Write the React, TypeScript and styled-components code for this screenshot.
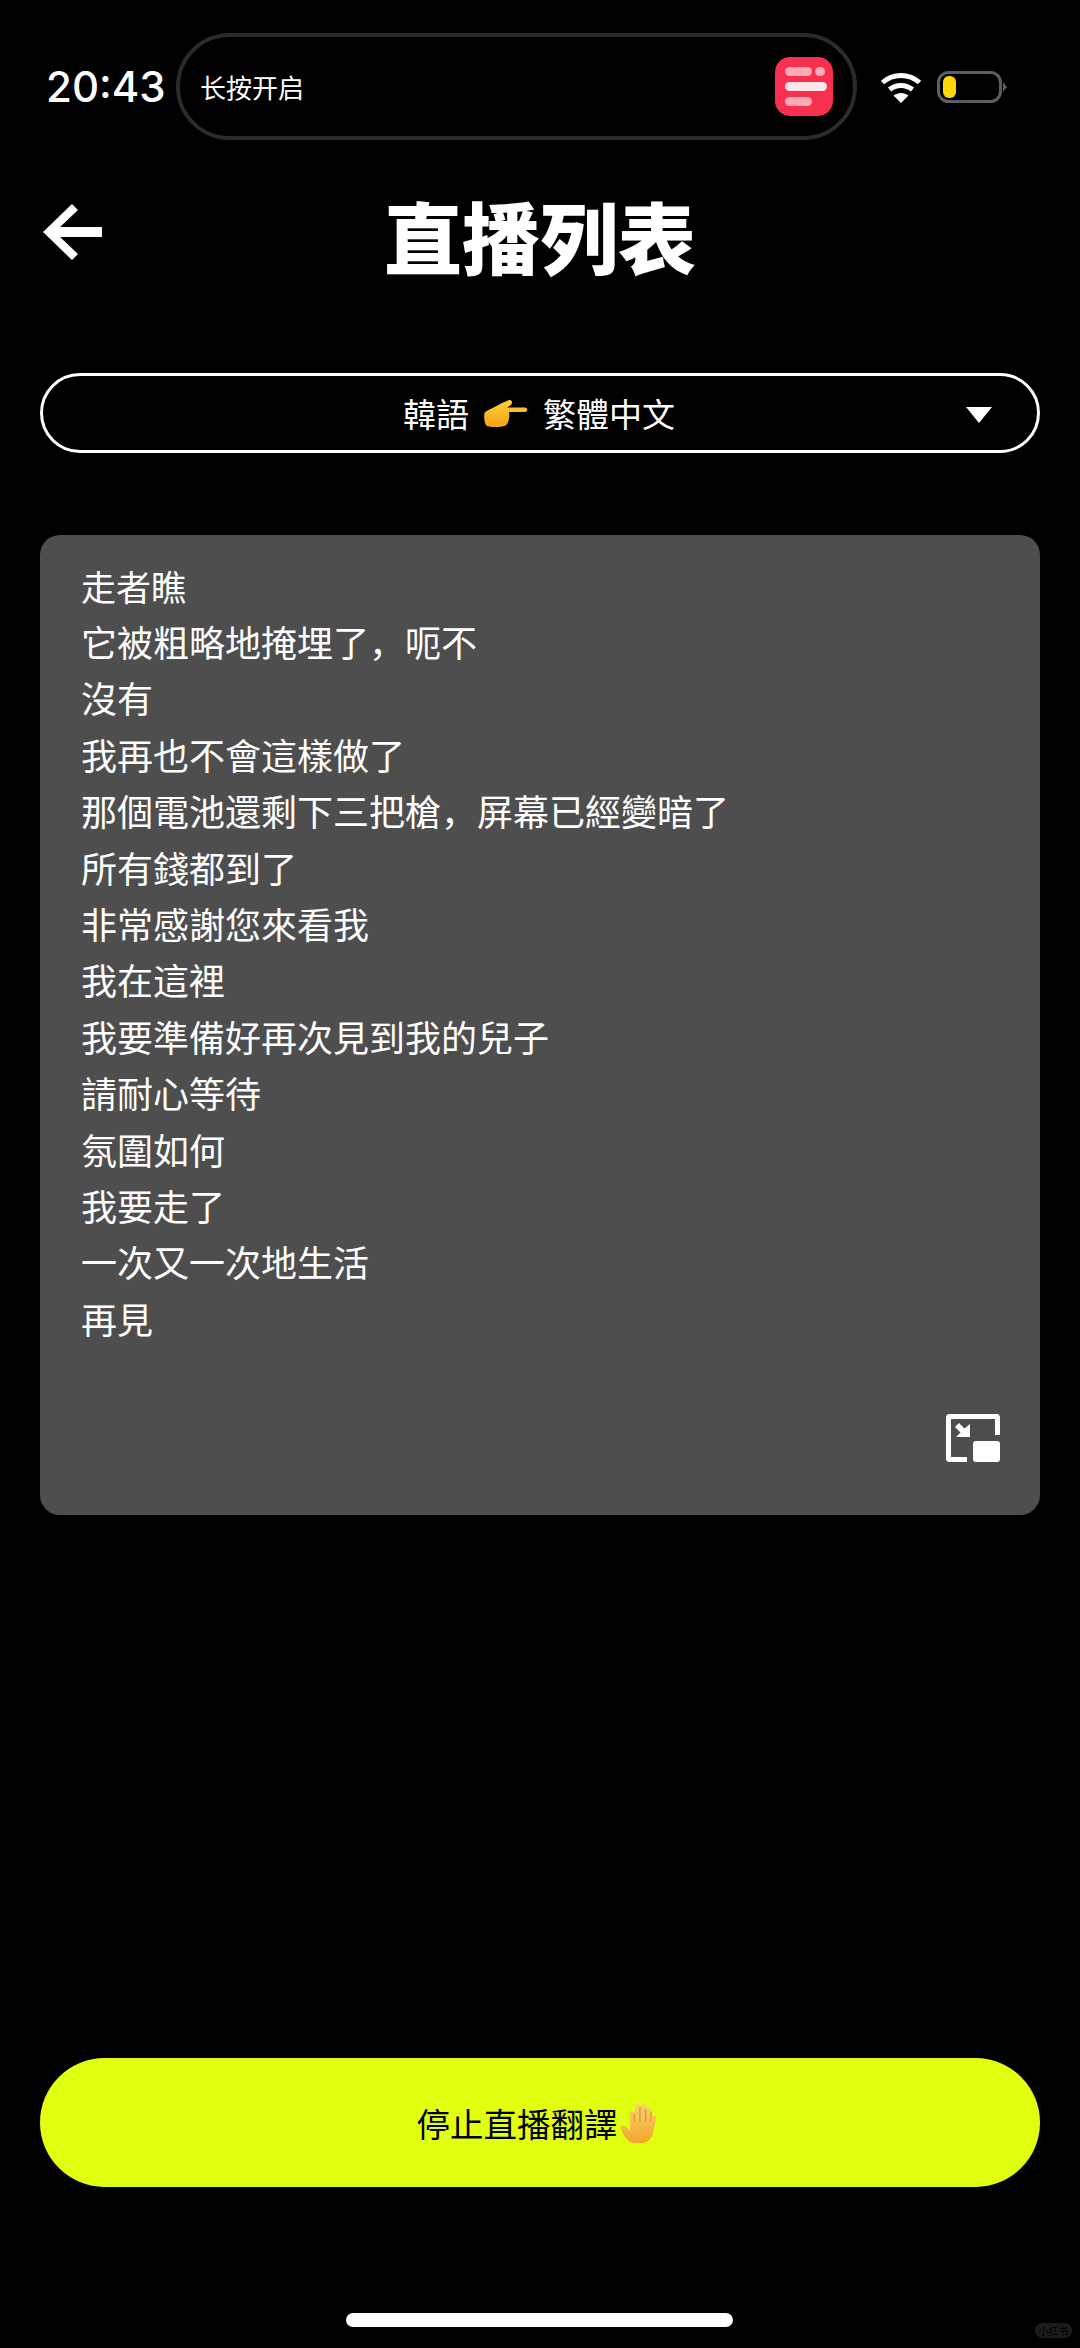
import React from 'react'
import styled, { createGlobalStyle } from 'styled-components'

const CJK = `"Noto Sans CJK SC", "Noto Sans CJK TC", "Liberation Sans", sans-serif`

const GlobalStyle = createGlobalStyle`
  html, body {
    margin: 0;
    padding: 0;
    background: #000;
  }
`

const Screen = styled.div`
  position: relative;
  width: 1080px;
  height: 2348px;
  box-sizing: border-box;
  padding: 33px 40px 0;
  display: flex;
  flex-direction: column;
  overflow: hidden;
  background: #000;
  color: #fff;
  font-family: ${CJK};
`

const StatusBar = styled.div`
  display: flex;
  align-items: center;
  height: 107px;
  margin: 0 31px 0 6px;
`
const Clock = styled.div`
  width: 130px;
  font-family: "Inter", "Liberation Sans", sans-serif;
  font-size: 42px;
  font-weight: 500;
`
const Island = styled.div`
  flex: none;
  width: 681px;
  height: 107px;
  box-sizing: border-box;
  padding: 0 20px 0 20px;
  display: flex;
  align-items: center;
  justify-content: space-between;
  border: 4px solid #2b2b2b;
  border-radius: 54px;
  font-size: 26px;
`
const StatusIcons = styled.div`
  display: flex;
  align-items: center;
  gap: 15px;
  margin-left: 23px;
`

const Header = styled.div`
  position: relative;
  display: flex;
  justify-content: center;
  margin-top: 49px;
`
const BackButton = styled.div`
  position: absolute;
  left: 3px;
  top: 15px;
  line-height: 0;
`
const Title = styled.h1`
  margin: 0;
  font-size: 78px;
  line-height: 92px;
  font-weight: 900;
`

const Selector = styled.div`
  position: relative;
  margin-top: 92px;
  height: 80px;
  box-sizing: border-box;
  display: flex;
  align-items: center;
  justify-content: center;
  gap: 15px;
  padding-right: 2px;
  border: 3px solid #fff;
  border-radius: 40px;
  font-size: 33px;
`
const Caret = styled.div`
  position: absolute;
  right: 45px;
  top: 31px;
  width: 0;
  height: 0;
  border-left: 13px solid transparent;
  border-right: 13px solid transparent;
  border-top: 16px solid #fff;
`

const Panel = styled.div`
  position: relative;
  margin-top: 82px;
  height: 980px;
  box-sizing: border-box;
  padding: 24px 41px 0;
  background: #4e4e4e;
  border-radius: 20px;
`
const Line = styled.div<{ $small?: boolean }>`
  font-size: ${(p) => (p.$small ? 35 : 36)}px;
  line-height: ${(p) => (p.$small ? 54 : 56.4)}px;
  white-space: nowrap;
`
const ShrinkIcon = styled.div`
  position: absolute;
  right: 40px;
  bottom: 53px;
  line-height: 0;
`

const StopButton = styled.div`
  position: absolute;
  left: 40px;
  right: 40px;
  top: 2058px;
  height: 129px;
  box-sizing: border-box;
  padding-right: 6px;
  display: flex;
  align-items: center;
  justify-content: center;
  gap: 2px;
  background: #e1ff10;
  border-radius: 65px;
  color: #000;
  font-size: 33.5px;
`
const HomeBar = styled.div`
  position: absolute;
  left: 346px;
  top: 2313px;
  width: 387px;
  height: 14px;
  border-radius: 7px;
  background: #fff;
`
const Watermark = styled.div`
  position: absolute;
  left: 1035px;
  top: 2323px;
  width: 37px;
  height: 15px;
  border-radius: 8px;
  background: #1c1c1c;
  color: #000;
  font-size: 10px;
  line-height: 15px;
  text-align: center;
`

const lines = [
  '它被粗略地掩埋了，呃不',
  '沒有',
  '我再也不會這樣做了',
  '那個電池還剩下三把槍，屏幕已經變暗了',
  '所有錢都到了',
  '非常感謝您來看我',
  '我在這裡',
  '我要準備好再次見到我的兒子',
  '請耐心等待',
  '氛圍如何',
  '我要走了',
  '一次又一次地生活',
  '再見',
]

const AppIcon = () => (
  <svg width="58" height="59" viewBox="0 0 58 59">
    <rect width="58" height="59" rx="15" fill="#f8304f" />
    <rect x="10" y="10" width="27" height="9" rx="4.5" fill="#ffa9b5" />
    <rect x="40" y="10" width="10" height="9" rx="4.5" fill="#ffa9b5" />
    <rect x="10" y="25" width="42" height="9" rx="4.5" fill="#ffe6ea" />
    <rect x="10" y="40" width="27" height="9" rx="4.5" fill="#ffa9b5" />
  </svg>
)

const WifiIcon = () => (
  <svg width="42" height="32" viewBox="0 0 42 32" fill="none" stroke="#fff" strokeWidth="5">
    <path d="M2.5 11.5C13 2 29 2 39.5 11.5" />
    <path d="M9.5 18.5C16 13 26 13 32.5 18.5" />
    <path d="M21 32L13.5 24.5C18 21 24 21 28.5 24.5Z" fill="#fff" stroke="none" />
  </svg>
)

const BatteryIcon = () => (
  <svg width="70" height="32" viewBox="0 0 70 32">
    <rect x="1.5" y="1.5" width="62" height="29" rx="10" fill="none" stroke="#5e5e5e" strokeWidth="3" />
    <rect x="6" y="5" width="13" height="22" rx="6" fill="#ffd60a" />
    <path d="M66 11L70 16L66 21Z" fill="#5e5e5e" />
  </svg>
)

const BackArrow = () => (
  <svg width="59" height="56" viewBox="0 0 59 56" fill="#fff">
    <path d="M29 0L35 6L17 23H59V33H17L35 50L29 56L0 28Z" />
  </svg>
)

const FingerEmoji = () => (
  <svg width="44" height="27" viewBox="0 0 44 27">
    <defs>
      <linearGradient id="fingerFill" x1="0" y1="0" x2="0" y2="1">
        <stop offset="0" stopColor="#ffd03a" />
        <stop offset="1" stopColor="#f2a213" />
      </linearGradient>
    </defs>
    <path
      d="M1 12C5 9 12 7 16 4L25 0C28 -0.5 29 3 27 5L23 7.5H41C44 7.5 44 12 41 12H25C26 16 25 24 21 26C16 27.5 6 27.5 3 26C0 24 -0.5 15 1 12Z"
      fill="url(#fingerFill)"
    />
  </svg>
)

const HandEmoji = () => (
  <svg width="38" height="42" viewBox="0 0 40 42">
    <defs>
      <linearGradient id="handFill" x1="0" y1="0" x2="0" y2="1">
        <stop offset="0" stopColor="#fbd36a" />
        <stop offset="1" stopColor="#f2a52e" />
      </linearGradient>
    </defs>
    <path
      d="M14 42C8 41 4 35 1 27C0 24 2 23 4 24C7 25 9 28 11 30L10 11C10 7 14 7 15 11L16 4C16 0 21 0 21 4L23 2C24 -1 28 0 28 3L28 7C29 4 33 5 33 8L33 15C34 12 39 13 38 17L35 31C33 38 29 42 23 42Z"
      fill="url(#handFill)"
    />
    <path d="M15 11L15 20M21 4L21 20M27 6L27 20M33 9L32 20" stroke="#e59a35" strokeWidth="1.5" fill="none" />
  </svg>
)

const ShrinkGlyph = () => (
  <svg width="54" height="48" viewBox="0 0 54 48" fill="#fff">
    <path d="M3 0H51C52.5 0 54 1.5 54 3V21H49V5H5V43H21V48H3C1.5 48 0 46.5 0 45V3C0 1.5 1.5 0 3 0Z" />
    <rect x="27" y="27" width="27" height="21" rx="3" />
    <path d="M24 10V23H10L14.5 18.5L9 13L13 9L18.5 14.5Z" />
  </svg>
)

const App = () => (
  <>
    <GlobalStyle />
    <Screen>
      <StatusBar>
        <Clock>20:43</Clock>
        <Island>
          <span>长按开启</span>
          <AppIcon />
        </Island>
        <StatusIcons>
          <WifiIcon />
          <BatteryIcon />
        </StatusIcons>
      </StatusBar>
      <Header>
        <BackButton>
          <BackArrow />
        </BackButton>
        <Title>直播列表</Title>
      </Header>
      <Selector>
        <span>韓語</span>
        <FingerEmoji />
        <span>繁體中文</span>
        <Caret />
      </Selector>
      <Panel>
        <Line $small>走者瞧</Line>
        {lines.map((line) => (
          <Line key={line}>{line}</Line>
        ))}
        <ShrinkIcon>
          <ShrinkGlyph />
        </ShrinkIcon>
      </Panel>
      <StopButton>
        停止直播翻譯
        <HandEmoji />
      </StopButton>
      <HomeBar />
      <Watermark>小红书</Watermark>
    </Screen>
  </>
)

export default App
